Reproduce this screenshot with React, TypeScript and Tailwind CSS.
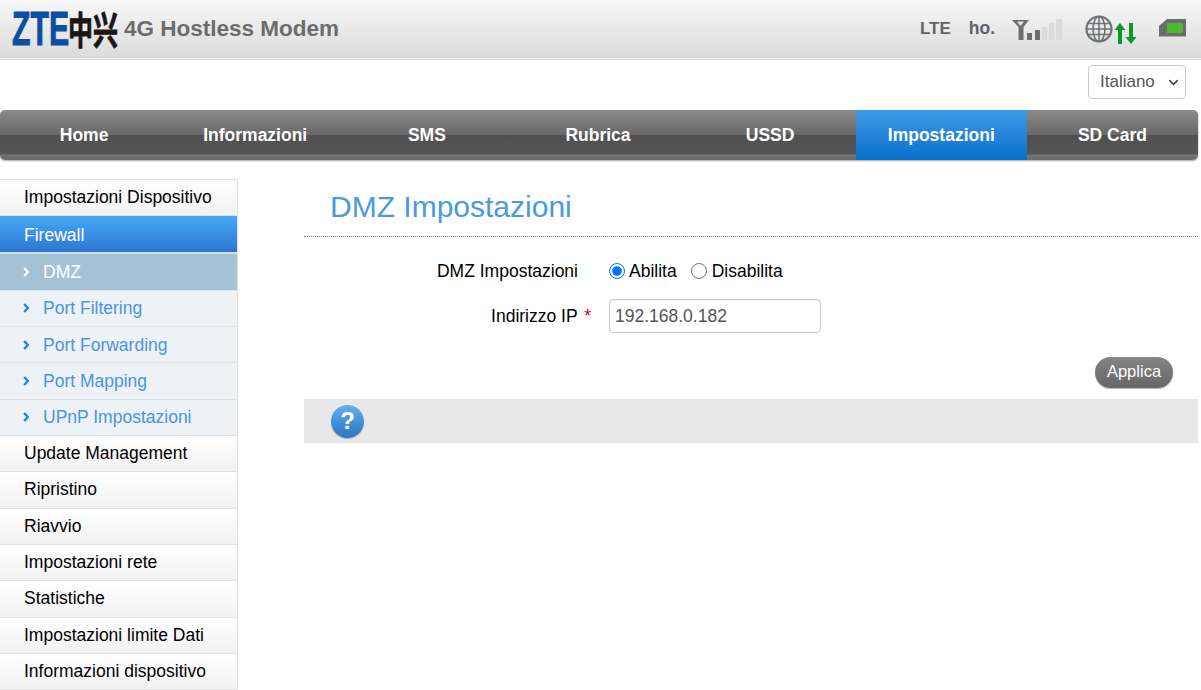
import React from 'react';
import { ChevronDown } from 'lucide-react';

const navItems = [
  { label: 'Home', shift: 'pr-[3px]' },
  { label: 'Informazioni', shift: 'pr-[3px]' },
  { label: 'SMS', shift: 'pr-[2px]' },
  { label: 'Rubrica', shift: 'pr-[2px]' },
  { label: 'USSD', shift: '' },
  { label: 'Impostazioni', shift: '' },
  { label: 'SD Card', shift: '' },
];

const menuTop = ['Impostazioni Dispositivo'];
const subItems = ['DMZ', 'Port Filtering', 'Port Forwarding', 'Port Mapping', 'UPnP Impostazioni'];
const menuBottom = [
  'Update Management',
  'Ripristino',
  'Riavvio',
  'Impostazioni rete',
  'Statistiche',
  'Impostazioni limite Dati',
  'Informazioni dispositivo',
];

const SignalIcon = () => (
  <svg width="51" height="21" viewBox="0 0 51 21">
    <path d="M0 1h17l-5.500 7v13H6.500V8z" fill="#6b6f72" />
    <path d="M5 2.500h7L8.500 7z" fill="#e4e5e6" />
    <rect x="15" y="14" width="5" height="7" fill="#6b6f72" />
    <rect x="23" y="11" width="5" height="10" fill="#6b6f72" />
    <rect x="30" y="8" width="5" height="13" fill="#d9dbdc" />
    <rect x="37" y="4" width="5" height="17" fill="#d9dbdc" />
    <rect x="44" y="0" width="6" height="21" fill="#d9dbdc" />
  </svg>
);

const GlobeIcon = () => (
  <svg width="52" height="29" viewBox="0 0 52 29">
    <g fill="none" stroke="#6f7376" strokeWidth="1.6">
      <circle cx="14" cy="14" r="12.500" strokeWidth="2.200" />
      <ellipse cx="14" cy="14" rx="6" ry="12.500" />
      <path d="M14 1.500v25M3 8.500h22M3 19.500h22M1.500 14h25" />
    </g>
    <path d="M35 8l5.500 7h-3.500v14h-4V15h-3.500z" fill="#0a9a2a" />
    <path d="M46 29l-5.500-7h3.500V8h4v14h3.500z" fill="#0a9a2a" />
  </svg>
);

const SimIcon = () => (
  <svg width="27" height="18" viewBox="0 0 27 18">
    <path d="M8 0h19v17.500H0V7z" fill="#696d70" />
    <rect x="8" y="4" width="16" height="10" fill="#4fb82f" />
  </svg>
);

const Chevron = ({ color }: { color: string }) => (
  <svg width="7" height="10" viewBox="0 0 7 10" className="shrink-0">
    <path d="M1.200 1l3.600 4-3.600 4" fill="none" stroke={color} strokeWidth="2.400" />
  </svg>
);

const HelpIcon = () => (
  <div className="flex h-[33px] w-[33px] items-center justify-center rounded-full bg-gradient-to-b from-[#63b0ee] to-[#2a74c4] text-[24px] leading-none font-bold text-white shadow-[0_1px_1px_rgba(0,0,0,0.25)]">
    ?
  </div>
);

const SideItem = ({ label }: { label: string }) => (
  <div className="flex h-[36.35px] items-center border-b border-[#e2e2e2] bg-gradient-to-b from-white to-[#f2f2f2] pb-[1px] pl-[24px] text-[17.5px] text-black">
    {label}
  </div>
);

export default function App() {
  return (
    <div className="h-[690px] w-[1201px] overflow-hidden bg-white font-['Liberation_Sans',Arial,sans-serif]">
      {/* Top banner */}
      <header className="flex h-[60px] items-center justify-between border-b-[3px] border-double border-[#d4d4d4] bg-gradient-to-b from-[#f7f7f7] to-[#dcdcdc] pr-[3px]">
        <div className="flex items-center pl-[12px]">
          <span className="inline-block w-[56px] origin-left scale-x-[0.63] text-[48px] leading-[46px] font-bold whitespace-nowrap text-[#0b4ea2] [-webkit-text-stroke:1px_#0b4ea2]">
            ZTE
          </span>
          <span className="inline-block scale-y-[1.5] text-[25px] leading-none font-bold font-['Noto_Sans_CJK_SC',sans-serif] text-[#1d1514] [-webkit-text-stroke:0.6px_#1d1514]">
            中兴
          </span>
          <span className="ml-[6px] text-[22.5px] font-bold text-[#6c6c6c]">4G Hostless Modem</span>
        </div>
        <div className="flex items-center">
          <span className="mr-[18px] text-[17px] font-bold text-[#5f6366]">LTE</span>
          <span className="mr-[17px] text-[17.5px] font-bold text-[#5f6366]">ho.</span>
          <div className="mr-[22px] mt-[1px]">
            <SignalIcon />
          </div>
          <div className="mr-[22px] mt-[1px]">
            <GlobeIcon />
          </div>
          <div className="mr-[12px] mb-[2px]">
            <SimIcon />
          </div>
        </div>
      </header>

      {/* Language */}
      <div className="flex h-[50px] items-start justify-end pt-[5px] pr-[15px]">
        <div className="relative">
          <select className="h-[34px] w-[98px] appearance-none rounded border border-[#cccccc] bg-white pl-[11px] text-[17px] text-[#555555]">
            <option>Italiano</option>
          </select>
          <ChevronDown
            size={15}
            strokeWidth={2.5}
            className="pointer-events-none absolute top-[10px] right-[5px] text-[#444444]"
          />
        </div>
      </div>

      {/* Main navigation */}
      <nav className="grid h-[50px] w-[1198px] grid-cols-7 overflow-hidden rounded-[5px] bg-[linear-gradient(#8a8a8a_0%,#686868_49%,#505050_50%,#555555_88%,#727272_90%,#6a6a6a_100%)] shadow-[0_1px_2px_rgba(0,0,0,0.35)]">
        {navItems.map((item) => (
          <div
            key={item.label}
            className={`flex items-center justify-center text-[17.5px] font-bold text-white ${item.shift} ${
              item.label === 'Impostazioni' ? 'bg-gradient-to-b from-[#3d9ae6] to-[#006fcb]' : ''
            }`}
          >
            {item.label}
          </div>
        ))}
      </nav>

      <div className="mt-[19px] flex">
        {/* Side menu */}
        <aside className="w-[238px] shrink-0 border-t border-r border-[#e2e2e2]">
          {menuTop.map((label) => (
            <SideItem key={label} label={label} />
          ))}
          <div className="flex h-[38px] items-center border-b-2 border-[#d8dde0] bg-gradient-to-b from-[#46a8f5] to-[#2f77d3] pt-[2px] pl-[24px] text-[17.5px] text-white">
            Firewall
          </div>
          {subItems.map((label, i) => (
            <div
              key={label}
              className={`flex h-[36.35px] items-center gap-[13px] border-b border-[#e0e4e6] pl-[23px] text-[17.5px] ${
                i === 0 ? 'bg-[#a3c2d6] text-white' : 'bg-[#edf2f6] text-[#4a94e0]'
              }`}
            >
              <Chevron color={i === 0 ? '#ffffff' : '#1a87e0'} />
              {label}
            </div>
          ))}
          {menuBottom.map((label) => (
            <SideItem key={label} label={label} />
          ))}
        </aside>

        {/* Content */}
        <main className="ml-[66px] w-[894px]">
          <h1 className="h-[58px] border-b border-dotted border-[#808080] pt-[8px] pl-[26px] text-[30px] leading-[40px] text-[#4a9ae0]">
            DMZ Impostazioni
          </h1>

          <div className="mt-[22px] flex h-[24px] items-center text-[17.5px] text-black">
            <label className="w-[274px] text-right">DMZ Impostazioni</label>
            <div className="ml-[31px] flex items-center">
              <input type="radio" name="dmz" defaultChecked className="m-0 h-[16px] w-[16px] accent-[#0075ff]" />
              <span className="ml-[4px]">Abilita</span>
              <input type="radio" name="dmz" className="m-0 ml-[14px] h-[16px] w-[16px]" />
              <span className="ml-[5px]">Disabilita</span>
            </div>
          </div>

          <div className="mt-[16px] flex h-[34px] items-center text-[17.5px] text-black">
            <label className="w-[287px] text-right">
              Indirizzo IP <span className="ml-[2px] text-[#d0021b]">*</span>
            </label>
            <input
              type="text"
              defaultValue="192.168.0.182"
              className="ml-[18px] h-[34px] w-[212px] rounded border border-[#cccccc] px-[5px] text-[17.5px] text-[#555555] shadow-[inset_0_1px_1px_rgba(0,0,0,0.075)]"
            />
          </div>

          <div className="mt-[24px] flex justify-end pr-[25px]">
            <button className="h-[31px] w-[78px] rounded-full bg-gradient-to-b from-[#858585] to-[#666666] pb-[2px] text-[16.5px] text-white shadow-[0_1px_1px_rgba(0,0,0,0.3)]">
              Applica
            </button>
          </div>

          <div className="mt-[11px] flex h-[44px] items-center bg-[#e8e8e8] pl-[27px]">
            <HelpIcon />
          </div>
        </main>
      </div>
    </div>
  );
}
